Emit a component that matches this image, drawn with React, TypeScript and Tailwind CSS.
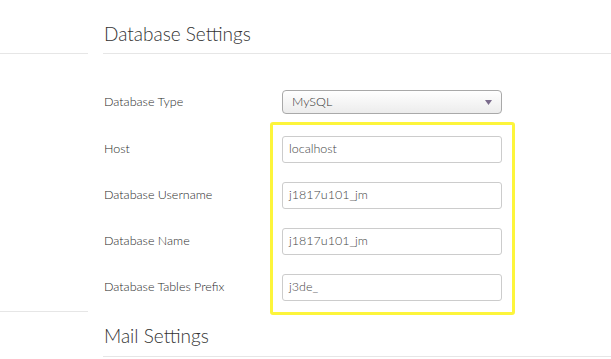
import React from "react";

const fields = [
  { label: "Host", value: "localhost" },
  { label: "Database Username", value: "j1817u101_jm" },
  { label: "Database Name", value: "j1817u101_jm" },
  { label: "Database Tables Prefix", value: "j3de_" },
];

export default function App() {
  return (
    <div className="flex w-[611px] h-[359px] overflow-hidden bg-white font-['Lato',sans-serif]">
      <div className="w-[88px] shrink-0 flex flex-col">
        <div className="h-[54px] border-b border-[#e6e6e6]" />
        <div className="h-[258px] border-b border-[#e6e6e6]" />
      </div>
      <div className="ml-[15px] flex-1 relative">
        <div className="h-[54px] border-b border-[#e6e6e6] pt-[20px]">
          <h2 className="pl-[1px] text-[19px] leading-[28px] text-[#333] font-light">Database Settings</h2>
        </div>
        <div className="flex flex-col pt-[36px]">
          <div className="flex items-center h-[24px]">
            <label className="w-[179px] pl-[1px] text-[12.5px] text-[#2a2a2a] font-light">Database Type</label>
            <div className="w-[220px] h-[24px] rounded-[4px] border border-[#a9a9a9] bg-gradient-to-b from-white to-[#ececec] flex items-center justify-between pl-[9px] pr-[9px]">
              <span className="text-[12.5px] text-[#333] font-light">MySQL</span>
              <svg width="7" height="5" viewBox="0 0 7 5"><path d="M0 0 H7 L3.5 5 Z" fill="#7a6b8c" /></svg>
            </div>
          </div>
          <div className="flex flex-col gap-[19px] mt-[22px]">
            {fields.map((f) => (
              <div key={f.label} className="flex items-center h-[27px]">
                <label className="w-[179px] pl-[1px] text-[12.5px] text-[#2a2a2a] font-light">{f.label}</label>
                <div className="w-[220px] h-[27px] rounded-[3px] border border-[#cccccc] bg-white flex items-center pl-[6px]">
                  <span className="text-[12.5px] text-[#444] font-light">{f.value}</span>
                </div>
              </div>
            ))}
          </div>
        </div>
        <div className="mt-[21px] h-[35px] border-b border-[#e6e6e6] pt-[0px]">
          <h2 className="pl-[1px] text-[19px] leading-[28px] text-[#333] font-light">Mail Settings</h2>
        </div>
        <div className="absolute left-[167px] top-[122px] w-[245px] h-[193px] border-[3px] border-[#fdf53b] rounded-[3px] pointer-events-none" />
      </div>
    </div>
  );
}
